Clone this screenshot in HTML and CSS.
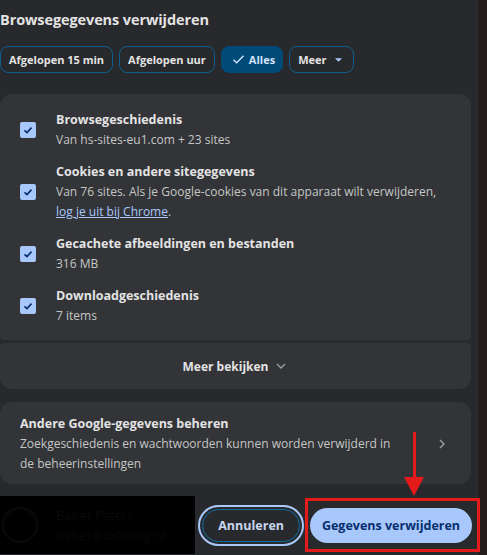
FILE: index.html
```html
<!DOCTYPE html>
<html lang="nl">
<head>
<meta charset="utf-8">
<title>Browsegegevens verwijderen</title>
<link rel="stylesheet" href="styles.css">
</head>
<body>
<div class="page">
  <div class="dialog">
    <h1 class="title">Browsegegevens verwijderen</h1>
    <div class="chips">
      <button class="chip">Afgelopen 15 min</button>
      <button class="chip">Afgelopen uur</button>
      <button class="chip chip-on"><svg class="chip-check" viewBox="0 0 14 12" width="13" height="11"><path d="M1.5 6.2 L5 9.6 L12.5 1.8" fill="none" stroke="currentColor" stroke-width="1.5"/></svg>Alles</button>
      <button class="chip">Meer<svg class="chip-caret" viewBox="0 0 8 4" width="7" height="4"><path d="M0 0 H8 L4 4 Z" fill="currentColor"/></svg></button>
    </div>

    <div class="group">
      <div class="section list">
        <div class="item">
          <span class="box"><svg viewBox="0 0 16 16" width="16" height="16"><path d="M4.5 8.3 L7 10.6 L11.5 5.6" fill="none" stroke="currentColor" stroke-width="1.6"/></svg></span>
          <div class="item-text">
            <div class="item-title">Browsegeschiedenis</div>
            <div class="item-sub">Van hs-sites-eu1.com + 23 sites</div>
          </div>
        </div>
        <div class="item">
          <span class="box"><svg viewBox="0 0 16 16" width="16" height="16"><path d="M4.5 8.3 L7 10.6 L11.5 5.6" fill="none" stroke="currentColor" stroke-width="1.6"/></svg></span>
          <div class="item-text">
            <div class="item-title">Cookies en andere sitegegevens</div>
            <div class="item-sub">Van 76 sites. Als je Google-cookies van dit apparaat wilt verwijderen, <a class="link" href="#">log je uit bij Chrome</a>.</div>
          </div>
        </div>
        <div class="item">
          <span class="box"><svg viewBox="0 0 16 16" width="16" height="16"><path d="M4.5 8.3 L7 10.6 L11.5 5.6" fill="none" stroke="currentColor" stroke-width="1.6"/></svg></span>
          <div class="item-text">
            <div class="item-title">Gecachete afbeeldingen en bestanden</div>
            <div class="item-sub">316 MB</div>
          </div>
        </div>
        <div class="item">
          <span class="box"><svg viewBox="0 0 16 16" width="16" height="16"><path d="M4.5 8.3 L7 10.6 L11.5 5.6" fill="none" stroke="currentColor" stroke-width="1.6"/></svg></span>
          <div class="item-text">
            <div class="item-title">Downloadgeschiedenis</div>
            <div class="item-sub">7 items</div>
          </div>
        </div>
      </div>
      <div class="section more">
        <span class="more-label">Meer bekijken</span>
        <svg class="more-chev" viewBox="0 0 10 6" width="10" height="6"><path d="M1 1 L5 5 L9 1" fill="none" stroke="currentColor" stroke-width="1.3"/></svg>
      </div>
    </div>

    <div class="manage">
      <div class="manage-text">
        <div class="item-title">Andere Google-gegevens beheren</div>
        <div class="item-sub">Zoekgeschiedenis en wachtwoorden kunnen worden verwijderd in de beheerinstellingen</div>
      </div>
      <svg class="manage-chev" viewBox="0 0 6 10" width="6" height="10"><path d="M1 1 L5 5 L1 9" fill="none" stroke="currentColor" stroke-width="1.4"/></svg>
    </div>

    <div class="footer">
      <div class="account">
        <span class="avatar"></span>
        <div class="acc-text">
          <div>Babet Peters</div>
          <div>babet@xxlliving.nl</div>
        </div>
      </div>
      <div class="actions">
        <span class="focus-ring"><button class="btn-outline">Annuleren</button></span>
        <button class="btn-fill">Gegevens verwijderen</button>
        <span class="red-box"></span>
        <span class="red-arrow"><span class="arrow-shaft"></span><span class="arrow-head"></span></span>
      </div>
    </div>
  </div>
  <div class="strip"></div>
</div>
</body>
</html>
```
FILE: styles.css
```css
* { box-sizing: border-box; }
html, body {
  margin: 0;
  padding: 0;
  background: #28292c;
  font-family: "Open Sans", "Noto Sans", sans-serif;
  color: #e3e3e3;
}
.page {
  display: flex;
  width: 487px;
  height: 555px;
  overflow: hidden;
}
.dialog {
  width: 477px;
  padding: 0 6px 0 0;
  display: flex;
  flex-direction: column;
}
.strip {
  width: 10px;
  background: #231e1b;
  border-left: 1px solid #2e2f33;
}
.title {
  margin: 10px 0 0 0;
  font-size: 14.5px;
  line-height: 20px;
  font-weight: 700;
  color: #e3e3e3;
  letter-spacing: -0.1px;
}
.chips {
  display: flex;
  gap: 6px;
  margin-top: 16px;
}
.chip {
  height: 27px;
  border: 1px solid #0e5e8f;
  border-radius: 8px;
  background: transparent;
  color: #e3e3e3;
  font-family: inherit;
  font-size: 11px;
  font-weight: 700;
  padding: 0 8px;
  display: flex;
  align-items: center;
  gap: 5px;
}
.chip-on {
  background: #004a77;
  border-color: #004a77;
  color: #d3e3fd;
  padding: 0 7px 0 10px;
  gap: 4px;
}
.chip-check { color: #d3e3fd; }
.chip-caret { color: #a8c7fa; margin-left: 3px; margin-right: 3px; }

.group {
  margin-top: 21px;
  display: flex;
  flex-direction: column;
  gap: 3px;
}
.section {
  background: #333438;
}
.list {
  border-radius: 12px 12px 4px 4px;
  padding: 16px 0 14px 0;
  display: flex;
  flex-direction: column;
  gap: 12px;
}
.item {
  display: flex;
  align-items: center;
  padding: 0 20px 0 20px;
}
.box {
  width: 16px;
  height: 16px;
  flex: none;
  background: #a8c7fa;
  border-radius: 2px;
  color: #062e6f;
  display: flex;
  margin-right: 20px;
}
.item-title {
  font-size: 12.5px;
  line-height: 20px;
  font-weight: 700;
  color: #e3e3e3;
}
.item-sub {
  font-size: 12px;
  line-height: 20px;
  color: #c4c7c5;
}
.link {
  color: #a8c7fa;
  text-decoration: underline;
  white-space: nowrap;
}
.more {
  border-radius: 4px 4px 12px 12px;
  height: 46px;
  display: flex;
  align-items: center;
  justify-content: center;
  gap: 8px;
  padding-right: 2px;
}
.more-label {
  font-size: 12px;
  font-weight: 700;
  color: #e3e3e3;
}
.more-chev { color: #9aa0a6; }

.manage {
  margin-top: 13px;
  background: #333438;
  border-radius: 12px;
  padding: 12px 26px 10px 20px;
  display: flex;
  align-items: center;
}
.manage-text { flex: 1; padding-right: 38px; }
.manage-chev { color: #9aa0a6; flex: none; }

.footer {
  display: flex;
  align-items: center;
  margin-top: 12px;
  height: 58px;
}
.account {
  width: 195px;
  height: 58px;
  background: #000;
  display: flex;
  align-items: center;
  gap: 18px;
  padding-left: 2px;
  color: #090909;
  font-size: 13px;
  line-height: 20px;
}
.avatar {
  width: 36px;
  height: 36px;
  border-radius: 50%;
  border: 2px solid #0a0a0a;
}
.actions {
  flex: 1;
  position: relative;
  display: flex;
  align-items: center;
  justify-content: flex-end;
  gap: 6px;
  margin-right: -1px;
}
.focus-ring {
  display: flex;
  border: 2px solid #a8c7fa;
  border-radius: 22px;
  padding: 2px;
}
.btn-outline {
  height: 33px;
  padding: 0 15px;
  border: 1px solid #0b6ea6;
  border-radius: 18px;
  background: transparent;
  color: #c7d7ee;
  font-family: inherit;
  font-size: 12.5px;
  font-weight: 700;
}
.btn-fill {
  height: 35px;
  width: 162px;
  border: none;
  border-radius: 18px;
  background: #a8c7fa;
  color: #062e6f;
  font-family: inherit;
  font-size: 12.5px;
  font-weight: 700;
}
.red-box {
  position: absolute;
  right: -8px;
  top: -7px;
  width: 175px;
  height: 54px;
  border: 3px solid #e51b1b;
}
.red-arrow {
  position: absolute;
  left: 209px;
  top: -73px;
  width: 20px;
  height: 64px;
  display: flex;
  flex-direction: column;
  align-items: center;
}
.arrow-shaft {
  width: 3px;
  height: 45px;
  background: #e51b1b;
}
.arrow-head {
  width: 0;
  height: 0;
  border-left: 10px solid transparent;
  border-right: 10px solid transparent;
  border-top: 19px solid #e51b1b;
}
```
